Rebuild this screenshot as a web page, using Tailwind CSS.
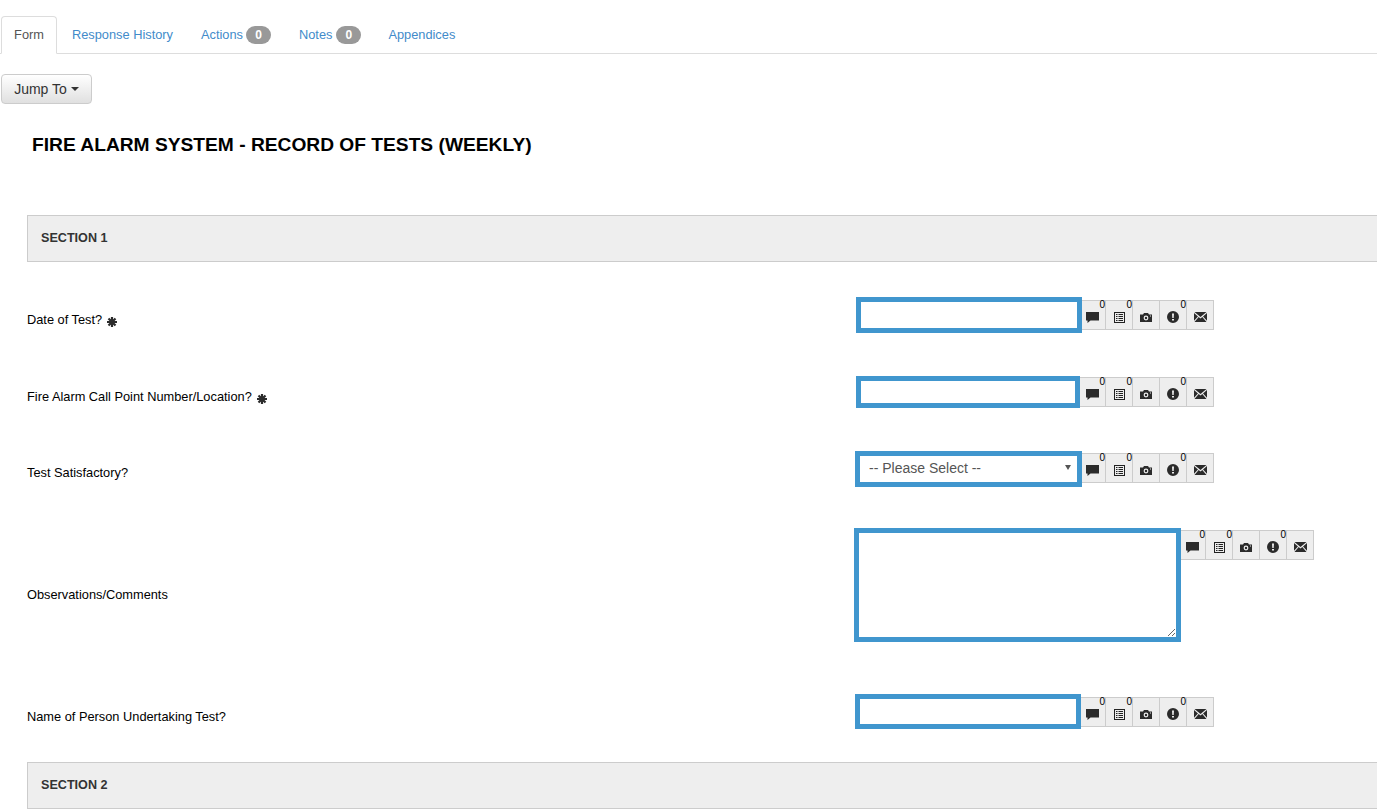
<!DOCTYPE html>
<html lang="en">
<head>
    <meta charset="UTF-8">
    <title>Fire Alarm System - Record of Tests</title>
    <script src="https://cdn.jsdelivr.net/npm/@tailwindcss/browser@4"></script>
</head>
<body class="bg-white overflow-hidden font-['Liberation_Sans',Arial,sans-serif] text-[12.8px] text-black">

    <!-- Icon set used by the question toolbars -->
    <svg class="hidden">
        <symbol id="i-comment" viewBox="0 0 13 11"><path fill="#2b2b2b" d="M0 0h13v8.500H4.500L1.500 11V8.500H0z"/></symbol>
        <symbol id="i-list" viewBox="0 0 11 11"><path fill="#222" fill-rule="evenodd" d="M0 0h11v11H0zM1 1v9h9V1zM2 2h1.500v1H2zM4.500 2H9v1H4.500zM2 4h1.500v1H2zM4.500 4H9v1H4.500zM2 6h1.500v1H2zM4.500 6H9v1H4.500zM2 8h1.500v1H2zM4.500 8H9v1H4.500z"/></symbol>
        <symbol id="i-camera" viewBox="0 0 12 9"><path fill="#2b2b2b" fill-rule="evenodd" d="M0 1.500h3L4 0h4l1 1.500h3V9H0zM6 2.600a2.400 2.400 0 1 0 0 4.800a2.400 2.400 0 0 0 0-4.800zM6 3.800a1.200 1.200 0 1 1 0 2.400a1.200 1.200 0 0 1 0-2.400zM10 2.500h1v1h-1z"/></symbol>
        <symbol id="i-alert" viewBox="0 0 12 12"><path fill="#2b2b2b" fill-rule="evenodd" d="M6 0a6 6 0 1 1 0 12A6 6 0 0 1 6 0zM5 2.500l.3 4.500h1.400L7 2.500zM5 8v1.600h2V8z"/></symbol>
        <symbol id="i-mail" viewBox="0 0 13 10"><path fill="#2b2b2b" d="M0.500 0h12L6.500 5zM0 1l4 3.400L0 8.800zM13 1v7.800L9 4.400zM4.700 5l1.800 1.500L8.300 5l4.200 5H0.500z"/></symbol>
        <symbol id="i-star" viewBox="0 0 10 10"><path stroke="#2b2b2b" stroke-width="2.200" d="M5 0v10M0 5h10M1.500 1.500l7 7M8.500 1.500l-7 7"/></symbol>
    </svg>

    <!-- Tabs -->
    <div class="flex items-end h-[54px] border-b border-[#ddd] pl-px text-[12.8px]">
        <a class="h-[38px] w-14 -mb-px mr-0.5 flex items-center justify-center bg-white border border-[#ddd] border-b-white rounded-t text-[#555]">Form</a>
        <a class="h-[38px] w-[127px] pt-px px-[13px] mr-0.5 flex items-center text-[#428bca]">Response History</a>
        <a class="h-[38px] pt-px px-[13px] mr-0.5 flex items-center gap-[3px] text-[#428bca]">Actions <span class="w-[25px] h-[18px] rounded-full bg-[#999] text-white text-xs font-bold flex items-center justify-center">0</span></a>
        <a class="h-[38px] pt-px px-[13px] mr-0.5 flex items-center gap-1 text-[#428bca]">Notes <span class="w-[25px] h-[18px] rounded-full bg-[#999] text-white text-xs font-bold flex items-center justify-center">0</span></a>
        <a class="h-[38px] pt-px px-[13px] -ml-px flex items-center text-[#428bca]">Appendices</a>
    </div>

    <!-- Jump to -->
    <div class="pl-px mt-5">
        <button class="h-[30px] w-[91px] flex items-center justify-center gap-1 rounded border border-[#ccc] bg-linear-to-b from-white to-[#e0e0e0] text-sm text-[#333]">
            Jump To
            <span class="border-x-4 border-t-4 border-x-transparent border-t-[#333]"></span>
        </button>
    </div>

    <h1 class="ml-8 mt-[31px] h-5 leading-5 text-[19.2px] font-bold">FIRE ALARM SYSTEM - RECORD OF TESTS (WEEKLY)</h1>

    <!-- Form body -->
    <div class="pl-[27px] mt-[60px]">

        <div class="h-[47px] -mr-1 flex items-center pl-[13px] pb-px bg-[#eee] border-y border-l border-[#ccc] text-[12.6px] font-bold text-[#333]">SECTION 1</div>

        <!-- Date of Test -->
        <div class="flex items-start mt-[35px] h-9">
            <label class="w-[829px] pt-[13px] flex items-center gap-[5px]">Date of Test? <svg class="w-2.5 h-2.5 mt-1"><use href="#i-star"/></svg></label>
            <input type="text" class="relative z-10 w-[226px] h-9 bg-white border-[5px] border-[#4096ce] outline-none">
            <div class="flex mt-[3px] -ml-[3px]">
                <div class="relative w-[27px] h-[30px] flex items-center justify-center pt-[5px] pl-px bg-[#eee] border-y border-r border-[#ccc]"><svg class="w-[13px] h-[11px]"><use href="#i-comment"/></svg><span class="absolute right-0 -top-px text-[10px] leading-[10px]">0</span></div>
                <div class="relative w-[27px] h-[30px] flex items-center justify-center pt-[5px] pl-px bg-[#eee] border-y border-r border-[#ccc]"><svg class="w-[11px] h-[11px]"><use href="#i-list"/></svg><span class="absolute right-0 -top-px text-[10px] leading-[10px]">0</span></div>
                <div class="relative w-[27px] h-[30px] flex items-center justify-center pt-[5px] bg-[#eee] border-y border-r border-[#ccc]"><svg class="w-3 h-[9px]"><use href="#i-camera"/></svg></div>
                <div class="relative w-[27px] h-[30px] flex items-center justify-center pt-1 bg-[#eee] border-y border-r border-[#ccc]"><svg class="w-3 h-3"><use href="#i-alert"/></svg><span class="absolute right-0 -top-px text-[10px] leading-[10px]">0</span></div>
                <div class="relative w-[27px] h-[30px] flex items-center justify-center pt-1 pl-px bg-[#eee] border-y border-r border-[#ccc]"><svg class="w-[13px] h-2.5"><use href="#i-mail"/></svg></div>
            </div>
        </div>

        <!-- Call point -->
        <div class="flex items-start mt-[43px] h-8">
            <label class="w-[829px] pt-[11px] flex items-center gap-[5px]">Fire Alarm Call Point Number/Location? <svg class="w-2.5 h-2.5 mt-1"><use href="#i-star"/></svg></label>
            <input type="text" class="relative z-10 w-[224px] h-8 bg-white border-[5px] border-[#4096ce] outline-none">
            <div class="flex mt-px -ml-px">
                <div class="relative w-[27px] h-[30px] flex items-center justify-center pt-[5px] pl-px bg-[#eee] border-y border-r border-[#ccc]"><svg class="w-[13px] h-[11px]"><use href="#i-comment"/></svg><span class="absolute right-0 -top-px text-[10px] leading-[10px]">0</span></div>
                <div class="relative w-[27px] h-[30px] flex items-center justify-center pt-[5px] pl-px bg-[#eee] border-y border-r border-[#ccc]"><svg class="w-[11px] h-[11px]"><use href="#i-list"/></svg><span class="absolute right-0 -top-px text-[10px] leading-[10px]">0</span></div>
                <div class="relative w-[27px] h-[30px] flex items-center justify-center pt-[5px] bg-[#eee] border-y border-r border-[#ccc]"><svg class="w-3 h-[9px]"><use href="#i-camera"/></svg></div>
                <div class="relative w-[27px] h-[30px] flex items-center justify-center pt-1 bg-[#eee] border-y border-r border-[#ccc]"><svg class="w-3 h-3"><use href="#i-alert"/></svg><span class="absolute right-0 -top-px text-[10px] leading-[10px]">0</span></div>
                <div class="relative w-[27px] h-[30px] flex items-center justify-center pt-1 pl-px bg-[#eee] border-y border-r border-[#ccc]"><svg class="w-[13px] h-2.5"><use href="#i-mail"/></svg></div>
            </div>
        </div>

        <!-- Test satisfactory -->
        <div class="flex items-start mt-[43px] h-9">
            <label class="w-[828px] pt-3">Test Satisfactory?</label>
            <div class="relative z-10 w-[227px] h-9">
                <select class="appearance-none w-full h-full pl-[9px] pb-0.5 bg-white border-[5px] border-[#4096ce] rounded-none text-sm text-[#555] outline-none">
                    <option>-- Please Select --</option>
                </select>
                <svg class="absolute right-[11px] top-[14px] w-1.5 h-[5px] pointer-events-none" viewBox="0 0 6 5"><path fill="#555" d="M0 0h6L3 5z"/></svg>
            </div>
            <div class="flex mt-0.5 -ml-[3px]">
                <div class="relative w-[27px] h-[30px] flex items-center justify-center pt-[5px] pl-px bg-[#eee] border-y border-r border-[#ccc]"><svg class="w-[13px] h-[11px]"><use href="#i-comment"/></svg><span class="absolute right-0 -top-px text-[10px] leading-[10px]">0</span></div>
                <div class="relative w-[27px] h-[30px] flex items-center justify-center pt-[5px] pl-px bg-[#eee] border-y border-r border-[#ccc]"><svg class="w-[11px] h-[11px]"><use href="#i-list"/></svg><span class="absolute right-0 -top-px text-[10px] leading-[10px]">0</span></div>
                <div class="relative w-[27px] h-[30px] flex items-center justify-center pt-[5px] bg-[#eee] border-y border-r border-[#ccc]"><svg class="w-3 h-[9px]"><use href="#i-camera"/></svg></div>
                <div class="relative w-[27px] h-[30px] flex items-center justify-center pt-1 bg-[#eee] border-y border-r border-[#ccc]"><svg class="w-3 h-3"><use href="#i-alert"/></svg><span class="absolute right-0 -top-px text-[10px] leading-[10px]">0</span></div>
                <div class="relative w-[27px] h-[30px] flex items-center justify-center pt-1 pl-px bg-[#eee] border-y border-r border-[#ccc]"><svg class="w-[13px] h-2.5"><use href="#i-mail"/></svg></div>
            </div>
        </div>

        <!-- Observations -->
        <div class="flex items-start mt-[41px] h-[114px]">
            <label class="w-[827px] pt-[57px]">Observations/Comments</label>
            <textarea class="relative z-10 w-[327px] h-[114px] bg-white border-[5px] border-[#4096ce] outline-none"></textarea>
            <div class="flex mt-0.5 -ml-0.5">
                <div class="relative w-[27px] h-[30px] flex items-center justify-center pt-[5px] pl-px bg-[#eee] border-y border-r border-[#ccc]"><svg class="w-[13px] h-[11px]"><use href="#i-comment"/></svg><span class="absolute right-0 -top-px text-[10px] leading-[10px]">0</span></div>
                <div class="relative w-[27px] h-[30px] flex items-center justify-center pt-[5px] pl-px bg-[#eee] border-y border-r border-[#ccc]"><svg class="w-[11px] h-[11px]"><use href="#i-list"/></svg><span class="absolute right-0 -top-px text-[10px] leading-[10px]">0</span></div>
                <div class="relative w-[27px] h-[30px] flex items-center justify-center pt-[5px] bg-[#eee] border-y border-r border-[#ccc]"><svg class="w-3 h-[9px]"><use href="#i-camera"/></svg></div>
                <div class="relative w-[27px] h-[30px] flex items-center justify-center pt-1 bg-[#eee] border-y border-r border-[#ccc]"><svg class="w-3 h-3"><use href="#i-alert"/></svg><span class="absolute right-0 -top-px text-[10px] leading-[10px]">0</span></div>
                <div class="relative w-[27px] h-[30px] flex items-center justify-center pt-1 pl-px bg-[#eee] border-y border-r border-[#ccc]"><svg class="w-[13px] h-2.5"><use href="#i-mail"/></svg></div>
            </div>
        </div>

        <!-- Name of person -->
        <div class="flex items-start mt-[52px] h-[35px]">
            <label class="w-[828px] pt-[13px]">Name of Person Undertaking Test?</label>
            <input type="text" class="relative z-10 w-[226px] h-[35px] bg-white border-[5px] border-[#4096ce] outline-none">
            <div class="flex mt-[3px] -ml-0.5">
                <div class="relative w-[27px] h-[30px] flex items-center justify-center pt-[5px] pl-px bg-[#eee] border-y border-r border-[#ccc]"><svg class="w-[13px] h-[11px]"><use href="#i-comment"/></svg><span class="absolute right-0 -top-px text-[10px] leading-[10px]">0</span></div>
                <div class="relative w-[27px] h-[30px] flex items-center justify-center pt-[5px] pl-px bg-[#eee] border-y border-r border-[#ccc]"><svg class="w-[11px] h-[11px]"><use href="#i-list"/></svg><span class="absolute right-0 -top-px text-[10px] leading-[10px]">0</span></div>
                <div class="relative w-[27px] h-[30px] flex items-center justify-center pt-[5px] bg-[#eee] border-y border-r border-[#ccc]"><svg class="w-3 h-[9px]"><use href="#i-camera"/></svg></div>
                <div class="relative w-[27px] h-[30px] flex items-center justify-center pt-1 bg-[#eee] border-y border-r border-[#ccc]"><svg class="w-3 h-3"><use href="#i-alert"/></svg><span class="absolute right-0 -top-px text-[10px] leading-[10px]">0</span></div>
                <div class="relative w-[27px] h-[30px] flex items-center justify-center pt-1 pl-px bg-[#eee] border-y border-r border-[#ccc]"><svg class="w-[13px] h-2.5"><use href="#i-mail"/></svg></div>
            </div>
        </div>

        <div class="h-[47px] mt-[33px] -mr-1 flex items-center pl-[13px] bg-[#eee] border-y border-l border-[#ccc] text-[12.6px] font-bold text-[#333]">SECTION 2</div>
    </div>

</body>
</html>
